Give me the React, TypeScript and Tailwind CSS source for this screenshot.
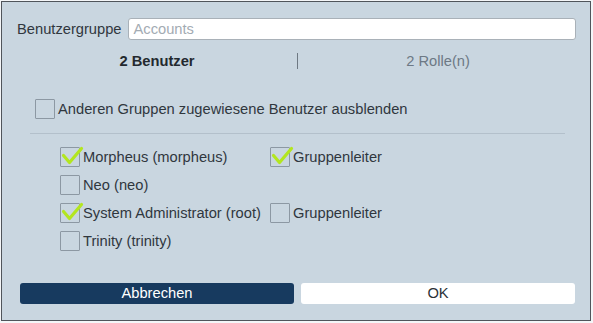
import React from "react";

function Check({ checked }: { checked?: boolean }) {
  return (
    <span className="relative inline-block w-[20px] h-[20px] shrink-0 border border-[#8c98a3] rounded-[1px]">
      {checked && (
        <svg
          className="absolute left-0 top-0 overflow-visible"
          width="20"
          height="20"
          viewBox="0 0 20 20"
        >
          <path
            d="M2.5 7.5 L8.5 14.5 L20.5 0.5"
            fill="none"
            stroke="#b3e61f"
            strokeWidth="3.2"
            strokeLinecap="round"
            strokeLinejoin="round"
          />
        </svg>
      )}
    </span>
  );
}

function Row({
  label,
  checked,
  lead,
}: {
  label: string;
  checked?: boolean;
  lead?: boolean | null;
}) {
  return (
    <div className="flex items-center h-[28px]">
      <div className="flex items-center w-[210px]">
        <Check checked={checked} />
        <span className="ml-[3px] whitespace-nowrap">{label}</span>
      </div>
      {lead !== null && lead !== undefined && (
        <div className="flex items-center">
          <Check checked={lead} />
          <span className="ml-[3px]">Gruppenleiter</span>
        </div>
      )}
    </div>
  );
}

export default function App() {
  return (
    <div
      className="w-[593px] h-[323px] bg-[#f4f6f8] pt-px pl-px text-[14.7px] text-[#30373e]"
      style={{ fontFamily: '"Liberation Sans", Arial, sans-serif' }}
    >
      <div className="w-[590px] h-[320px] border border-[#50555b] bg-[#c9d6e0] flex flex-col">
        <div className="flex items-center pt-[16px] pl-[15px] pr-[14px]">
          <span className="mr-[6px]">Benutzergruppe</span>
          <div className="flex-1 h-[22px] bg-white border border-[#a9b1b8] rounded-[3px] flex items-center px-[5px] text-[#a3abb3]">
            Accounts
          </div>
        </div>

        <div className="flex items-center mt-[8px] h-[26px] pl-[15px] pr-[12px]">
          <div className="flex-1 text-center font-bold text-[#23292f]">2 Benutzer</div>
          <div className="w-px h-[16px] bg-[#6e7983]" />
          <div className="flex-1 text-center text-[#6d7985]">2 Rolle(n)</div>
        </div>

        <div className="flex items-center mt-[24px] ml-[33px] h-[22px]">
          <Check />
          <span className="ml-[3px]">Anderen Gruppen zugewiesene Benutzer ausblenden</span>
        </div>

        <div className="mt-[13px] ml-[28px] mr-[25px] h-px bg-[#b3c0cb]" />

        <div className="mt-[9px] ml-[58px] flex flex-col">
          <Row label="Morpheus (morpheus)" checked lead />
          <Row label="Neo (neo)" />
          <Row label="System Administrator (root)" checked lead={false} />
          <Row label="Trinity (trinity)" />
        </div>

        <div className="mt-auto mb-[16px] flex gap-[7px] pl-[18px] pr-[15px]">
          <button className="flex-1 h-[21px] rounded-[3px] bg-[#173a5f] text-white leading-none">
            Abbrechen
          </button>
          <button className="flex-1 h-[21px] rounded-[3px] bg-white text-[#2a3138] leading-none">
            OK
          </button>
        </div>
      </div>
    </div>
  );
}
